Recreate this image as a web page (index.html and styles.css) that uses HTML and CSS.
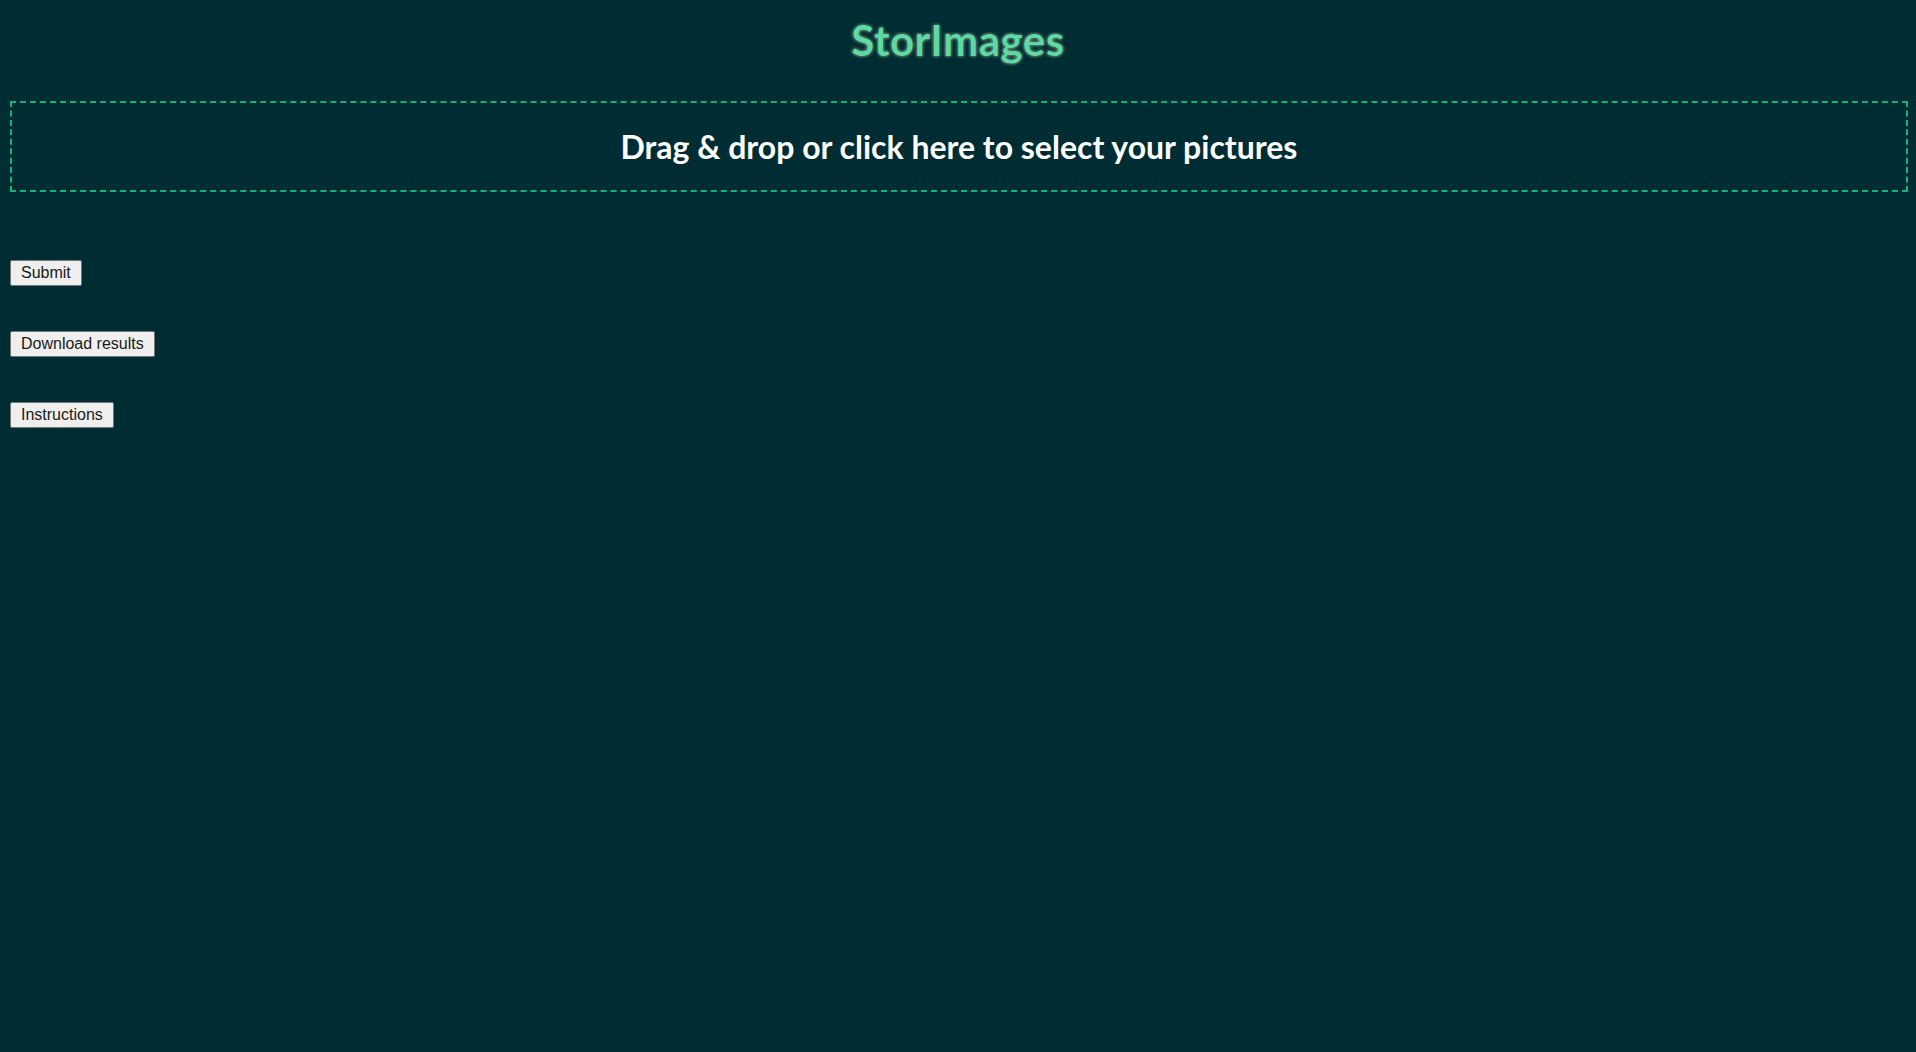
FILE: index.html
```html
<!DOCTYPE html>
<html lang="en">
<head>
<meta charset="utf-8">
<title>StorImages</title>
<link rel="stylesheet" href="styles.css">
</head>
<body>
<header class="header">
  <h1 class="title">StorImages</h1>
</header>
<div class="dropzone">
  <p class="dropzone-text">Drag &amp; drop or click here to select your pictures</p>
</div>
<div class="actions">
  <button class="btn" type="button">Submit</button>
  <button class="btn" type="button">Download results</button>
  <button class="btn" type="button">Instructions</button>
</div>
</body>
</html>
```

FILE: styles.css
```css
html, body {
  margin: 0;
  padding: 0;
  background: #002d33;
  min-height: 100%;
}
body {
  font-family: "Lato", "Open Sans", sans-serif;
}
.header {
  padding-top: 15px;
  height: 101px;
  box-sizing: border-box;
}
.title {
  margin: 0;
  text-align: center;
  font-size: 42px;
  line-height: 50px;
  font-weight: 700;
  letter-spacing: 0.5px;
  color: #5fd9a3;
  text-shadow: 0 0 1px #03201f, 0 0 1px #03201f, 0 0 3px #e8f3c6;
}
.dropzone {
  margin: 0 8px 0 10px;
  height: 91px;
  box-sizing: border-box;
  border: 2px dashed #12b27b;
  display: flex;
  align-items: center;
  justify-content: center;
}
.dropzone-text {
  margin: 0;
  color: #ffffff;
  font-size: 32px;
  font-weight: 700;
}
.actions {
  display: flex;
  flex-direction: column;
  align-items: flex-start;
  gap: 45px;
  padding: 68px 0 0 10px;
}
.btn {
  font-family: "Liberation Sans", Arial, sans-serif;
  font-size: 16px;
  line-height: 20px;
  padding: 2px 10px;
  border-radius: 2px;
  background: #efefef;
  color: #1a1a1a;
  border: 1px solid #767676;
}
```
